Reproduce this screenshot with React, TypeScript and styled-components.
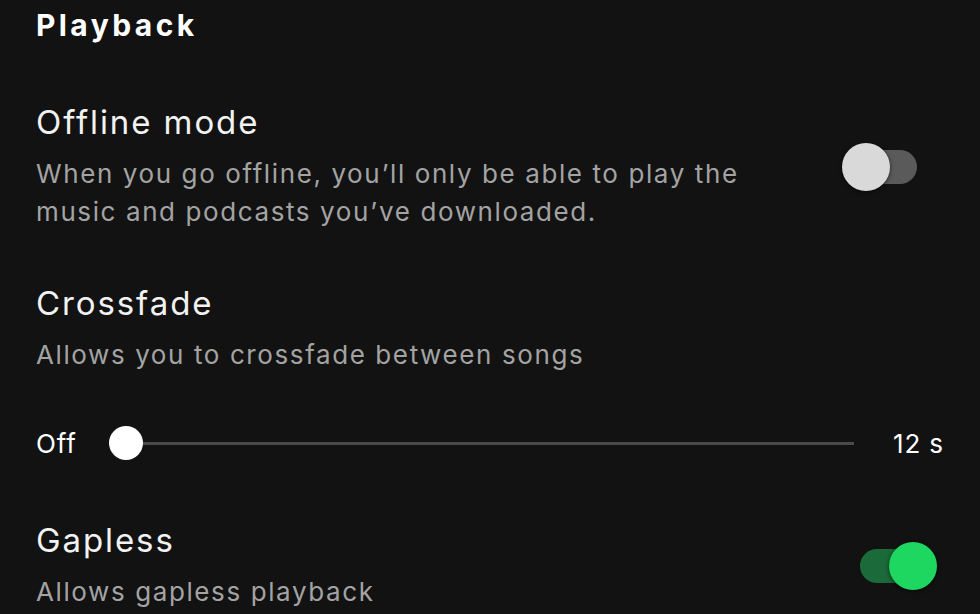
import styled, { createGlobalStyle } from 'styled-components';

const GlobalStyle = createGlobalStyle`
    html, body {
        margin: 0;
        padding: 0;
        background: #121212;
    }

    body {
        font-family: Inter, "Noto Sans", sans-serif;
        color: #fff;
        -webkit-font-smoothing: antialiased;
    }
`;

const Page = styled.div`
    width: 980px;
    height: 614px;
    overflow: hidden;
    background: #121212;
    padding: 0 36px;
    box-sizing: border-box;
`;

const Heading = styled.h1`
    margin: 0;
    padding-top: 6px;
    font-size: 30px;
    line-height: 38px;
    font-weight: 700;
    letter-spacing: 3.4px;
`;

const Setting = styled.div<{ $top: number }>`
    display: flex;
    align-items: center;
    justify-content: space-between;
    margin-top: ${(p) => p.$top}px;
`;

const Text = styled.div`
    display: flex;
    flex-direction: column;
`;

const Title = styled.div`
    font-size: 33px;
    line-height: 40px;
    font-weight: 400;
    letter-spacing: 1.9px;
    color: #f2f2f2;
`;

const Description = styled.div`
    margin-top: 13px;
    max-width: 740px;
    font-size: 26px;
    line-height: 38px;
    letter-spacing: 1.6px;
    color: #a3a3a3;
`;

const Switch = styled.div<{ $on: boolean }>`
    position: relative;
    width: 72px;
    height: 34px;
    border-radius: 17px;
    margin-right: ${(p) => (p.$on ? '12px' : '27px')};
    background: ${(p) => (p.$on ? '#1b6a39' : '#5a5a5a')};
    flex-shrink: 0;
`;

const Knob = styled.div<{ $on: boolean }>`
    position: absolute;
    top: 50%;
    left: ${(p) => (p.$on ? '29px' : '-3px')};
    width: 48px;
    height: 48px;
    margin-top: -24px;
    border-radius: 50%;
    background: ${(p) => (p.$on ? '#1ed760' : '#d9d9d9')};
    box-shadow: 0 1px 4px rgba(0, 0, 0, 0.6);
`;

const SliderRow = styled.div`
    display: flex;
    align-items: center;
    margin-top: 49px;
    height: 40px;
`;

const SliderLabel = styled.span`
    font-size: 26px;
    letter-spacing: 0.9px;
    color: #fff;
`;

const Track = styled.div`
    position: relative;
    flex: 1;
    height: 3px;
    margin: 0 39px 0 32px;
    background: #4a4a4a;
`;

const Thumb = styled.div`
    position: absolute;
    left: 0;
    top: 50%;
    width: 34px;
    height: 34px;
    margin-top: -17px;
    border-radius: 50%;
    background: #fff;
`;

function Toggle({ on }: { on: boolean }) {
    return (
        <Switch $on={on}>
            <Knob $on={on} />
        </Switch>
    );
}

export default function App() {
    return (
        <Page>
            <GlobalStyle />
            <Heading>Playback</Heading>

            <Setting $top={58}>
                <Text>
                    <Title>Offline mode</Title>
                    <Description>
                        When you go offline, you’ll only be able to play the music and podcasts you’ve downloaded.
                    </Description>
                </Text>
                <Toggle on={false} />
            </Setting>

            <Setting $top={52}>
                <Text>
                    <Title>Crossfade</Title>
                    <Description>Allows you to crossfade between songs</Description>
                </Text>
            </Setting>

            <SliderRow>
                <SliderLabel>Off</SliderLabel>
                <Track>
                    <Thumb />
                </Track>
                <SliderLabel>12 s</SliderLabel>
            </SliderRow>

            <Setting $top={57}>
                <Text>
                    <Title>Gapless</Title>
                    <Description>Allows gapless playback</Description>
                </Text>
                <Toggle on={true} />
            </Setting>
        </Page>
    );
}
